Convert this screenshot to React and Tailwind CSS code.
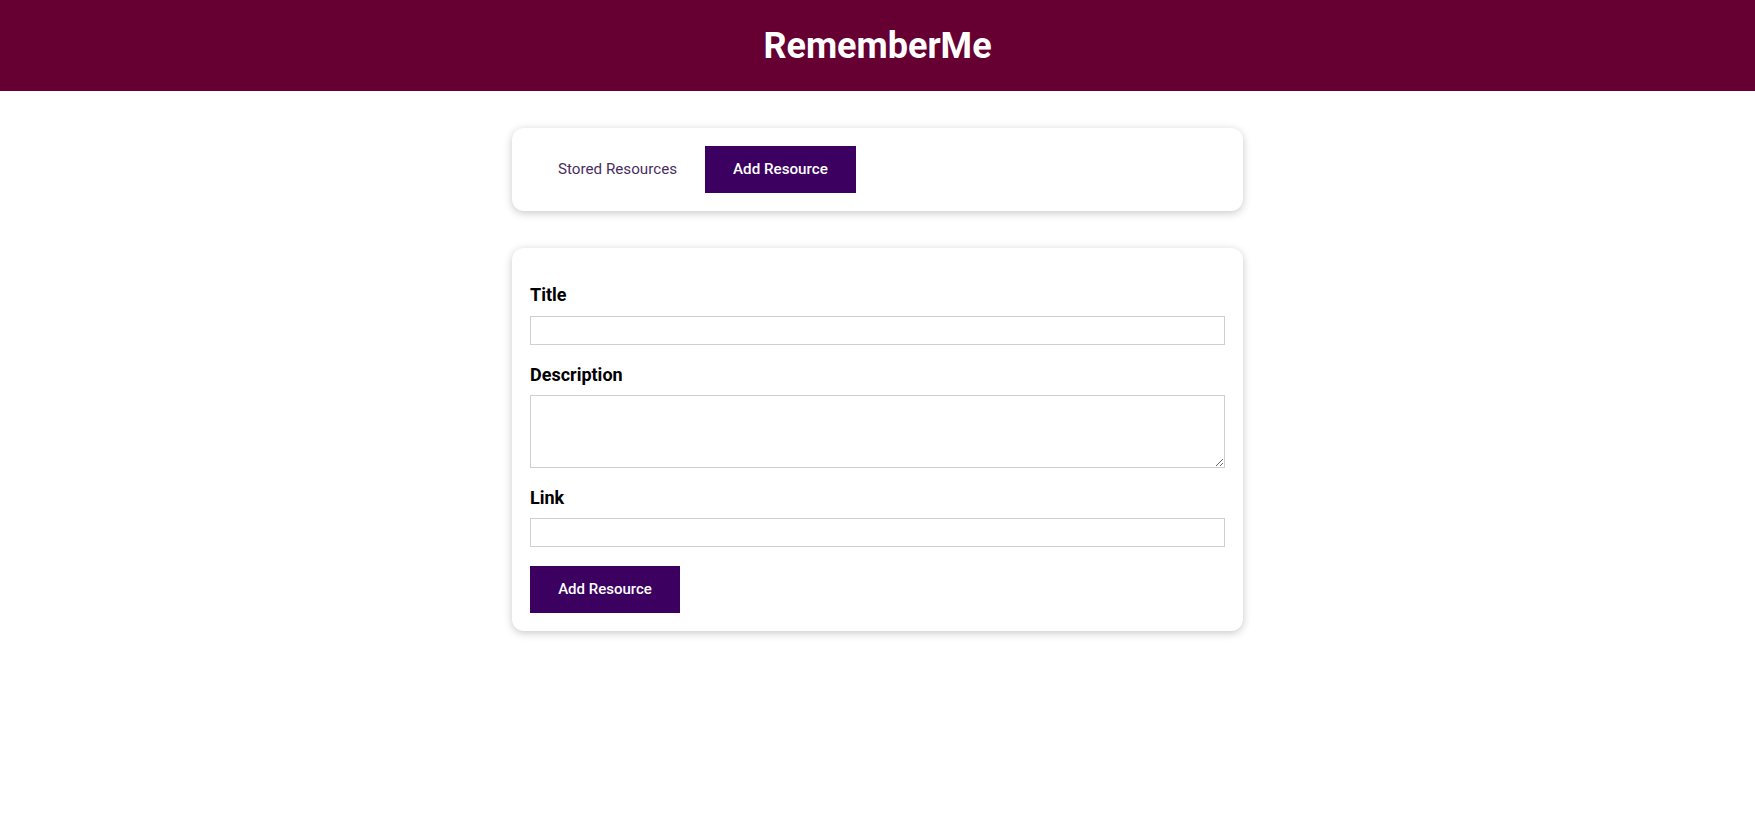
import { useState } from 'react';

const App = () => {
  const [tab, setTab] = useState('add');

  return (
    <div className="min-h-screen bg-white font-['Roboto',sans-serif]">
      {/* Header */}
      <header className="h-[91px] bg-[#660033] flex items-center justify-center">
        <h1 className="text-[36px] font-bold text-white leading-none">RememberMe</h1>
      </header>

      <main className="w-[731px] mx-auto pt-[37px] pb-10">
        {/* Tabs */}
        <div className="bg-white rounded-xl shadow-[0_2px_8px_rgba(0,0,0,0.22)] p-[18px] flex items-center">
          <button
            onClick={() => setTab('stored')}
            className={`h-[47px] px-[28px] text-[15.2px] ${
              tab === 'stored' ? 'bg-[#3c0061] text-white font-medium' : 'text-[#4a2d63]'
            }`}
          >
            Stored Resources
          </button>
          <button
            onClick={() => setTab('add')}
            className={`h-[47px] px-[28px] text-[15.2px] ${
              tab === 'add' ? 'bg-[#3c0061] text-white font-medium' : 'text-[#4a2d63]'
            }`}
          >
            Add Resource
          </button>
        </div>

        {/* Form */}
        <form
          onSubmit={(e) => e.preventDefault()}
          className="mt-[37px] bg-white rounded-xl shadow-[0_2px_8px_rgba(0,0,0,0.22)] p-[18px] flex flex-col"
        >
          <label className="block mt-[18px] mb-[11px] text-[18px] font-bold text-black leading-[21px]">Title</label>
          <input type="text" className="h-[29px] w-full border border-[#cfcfcf] outline-none px-2" />

          <label className="block mt-[19px] mb-[10px] text-[18px] font-bold text-black leading-[21px]">Description</label>
          <textarea className="h-[73px] w-full border border-[#cfcfcf] outline-none px-2 block" />

          <label className="block mt-[19px] mb-[10px] text-[18px] font-bold text-black leading-[21px]">Link</label>
          <input type="text" className="h-[29px] w-full border border-[#cfcfcf] outline-none px-2" />

          <div className="mt-[19px]">
            <button type="submit" className="h-[47px] w-[150px] bg-[#3c0061] text-white text-[15px] font-medium">
              Add Resource
            </button>
          </div>
        </form>
      </main>
    </div>
  );
};

export default App;
